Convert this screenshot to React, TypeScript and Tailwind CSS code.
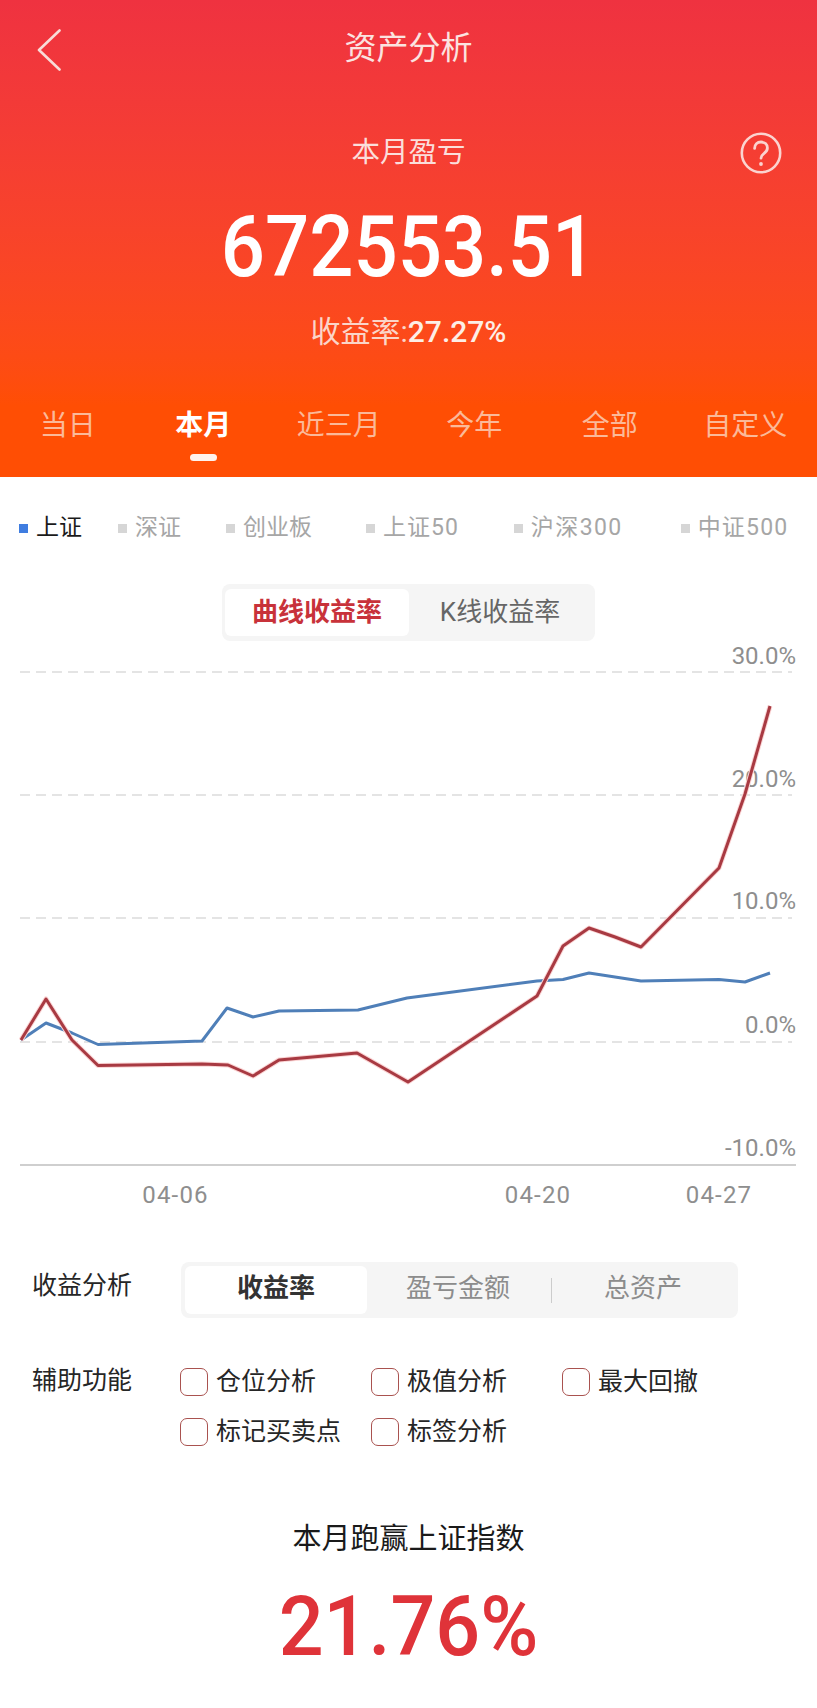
const font = "font-['Roboto','Noto_Sans_CJK_SC',sans-serif]";

const tabs = ["当日", "本月", "近三月", "今年", "全部", "自定义"];

const legend = [
  { label: "上证", active: true, gap: "ml-[19px]", track: "" },
  { label: "深证", active: false, gap: "ml-[36px]", track: "" },
  { label: "创业板", active: false, gap: "ml-[45px]", track: "" },
  { label: "上证50", active: false, gap: "ml-[54px]", track: "tracking-[1px]" },
  { label: "沪深300", active: false, gap: "ml-[55px]", track: "tracking-[1.4px]" },
  { label: "中证500", active: false, gap: "ml-[58px]", track: "tracking-[1.2px]" },
];

const redLine =
  "21,1040 46,999 72,1040 98,1065.5 202,1064 228,1065 253,1076 279,1060 357,1053 408,1082 537,996 563,946 589,928 615,937 641,947 719,868 745,794 770,706";
const blueLine =
  "21,1040 46,1023 72,1033 98,1044.5 202,1041 227,1008 253,1017 279,1011 358,1010 407,998 537,981 563,979.5 589,973 615,977 641,981 719,979.5 745,982 770,973";

const gridY = [672, 795, 918, 1042];
const yLabels = [
  { text: "30.0%", y: 664 },
  { text: "20.0%", y: 787 },
  { text: "10.0%", y: 909 },
  { text: "0.0%", y: 1033 },
  { text: "-10.0%", y: 1156 },
];
const xLabels = [
  { text: "04-06", x: 175.5 },
  { text: "04-20", x: 538 },
  { text: "04-27", x: 719 },
];

function Checkbox({ label }: { label: string }) {
  return (
    <div className="flex h-[28px] items-center">
      <span className="h-[28px] w-[28px] rounded-[7px] border-[1.5px] border-[#a9524f] bg-white" />
      <span className="ml-[8px] text-[25px] leading-[28px] text-[#262626]">{label}</span>
    </div>
  );
}

function Chart() {
  return (
    <svg viewBox="0 641 817 574" className="h-[574px] w-[817px]">
      {gridY.map((y) => (
        <line key={y} x1={20} x2={792} y1={y} y2={y} stroke="#dcdcdc" strokeWidth={1.5} strokeDasharray="10 6" />
      ))}
      <line x1={20} x2={796} y1={1165} y2={1165} stroke="#cfcfcf" strokeWidth={2} />
      {yLabels.map((l) => (
        <text key={l.text} x={796} y={l.y} textAnchor="end" fontSize={24} fill="#8e8e8e" fontFamily="Roboto, sans-serif">
          {l.text}
        </text>
      ))}
      {xLabels.map((l) => (
        <text key={l.text} x={l.x} y={1203} textAnchor="middle" fontSize={24} letterSpacing={1.2} fill="#8e8e8e" fontFamily="Roboto, sans-serif">
          {l.text}
        </text>
      ))}
      <polyline points={blueLine} fill="none" stroke="#4f7fb8" strokeWidth={3} strokeLinejoin="round" />
      <polyline points={redLine} fill="none" stroke="#fbd5d5" strokeWidth={5} strokeLinejoin="round" />
      <polyline points={redLine} fill="none" stroke="#a83a42" strokeWidth={3} strokeLinejoin="round" />
    </svg>
  );
}

export default function App() {
  return (
    <div className={`h-[1708px] w-[817px] overflow-hidden bg-white ${font}`}>
      <header className="flex h-[477px] flex-col bg-gradient-to-b from-[#ef3240] to-[#ff4e04] to-85% text-white">
        <div className="grid h-[95px] grid-cols-[1fr_auto_1fr] items-center">
          <svg viewBox="0 0 24 42" className="ml-[37px] mt-[4px] h-[42px] w-[24px]">
            <path d="M22.5 1.5 2 21l20.5 19.5" fill="none" stroke="#f8dcd8" strokeWidth={2.6} strokeLinecap="round" strokeLinejoin="round" />
          </svg>
          <h1 className="text-[32px] leading-[44px] text-[#fbe3e0]">资产分析</h1>
        </div>

        <div className="mt-[37px] grid h-[42px] grid-cols-[1fr_auto_1fr] items-center">
          <span />
          <span className="text-[28.5px] leading-[42px] text-[#fbdedb]">本月盈亏</span>
          <svg viewBox="0 0 42 42" className="ml-auto mr-[35px] h-[42px] w-[42px]">
            <circle cx={21} cy={21} r={19.2} fill="none" stroke="#fbd3cf" strokeWidth={2.6} />
            <path d="M14.6 16.4c0-4 2.7-6.4 6.4-6.4s6.4 2.4 6.4 6c0 3-1.8 4.4-3.8 5.8-1.7 1.2-2.6 2.2-2.6 4.4" fill="none" stroke="#fbd3cf" strokeWidth={2.8} strokeLinecap="round" />
            <circle cx={21} cy={32} r={1.9} fill="#fbd3cf" />
          </svg>
        </div>

        <div className="mt-[30px] h-[86px] scale-x-[0.905] text-center text-[86px] font-medium leading-[86px] text-white">
          672553.51
        </div>

        <div className="mt-[26px] flex h-[32px] items-center justify-center text-[30px] leading-[32px]">
          <span className="text-[#fbd5c8]">收益率:</span>
          <span className="font-medium text-[#fdeee6]">27.27%</span>
        </div>

        <nav className="mt-[60px] grid w-[813px] grid-cols-6 text-center text-[28px] leading-[36px] text-[#fbb999]">
          {tabs.map((tab) => (
            <div key={tab} className="flex flex-col items-center">
              <span className={tab === "本月" ? "font-bold text-white" : ""}>{tab}</span>
              {tab === "本月" ? <span className="mt-[10px] h-[7px] w-[27px] rounded-full bg-[#fff3ee]" /> : null}
            </div>
          ))}
        </nav>
      </header>

      <div className="mt-[36px] flex h-[30px] items-center">
        {legend.map((item) => (
          <div key={item.label} className={`flex items-center ${item.gap}`}>
            <span className={`h-[9px] w-[9px] ${item.active ? "bg-[#3f7de0]" : "bg-[#d6d6d6]"}`} />
            <span className={`ml-[8px] text-[23px] leading-[30px] ${item.track} ${item.active ? "text-[#1a1a1a]" : "text-[#a6a6a6]"}`}>
              {item.label}
            </span>
          </div>
        ))}
      </div>

      <div className="ml-[222px] mt-[41px] flex h-[57px] w-[373px] items-center rounded-[8px] bg-[#f5f5f5] pl-[3px]">
        <div className="flex h-[47px] w-[184px] items-center justify-center rounded-[6px] bg-white text-[26px] font-bold text-[#c8323a]">
          曲线收益率
        </div>
        <div className="flex-1 pr-[4px] text-center text-[26px] text-[#666666]">K线收益率</div>
      </div>

      <Chart />

      <div className="ml-[32px] mt-[47px] flex items-start">
        <span className="w-[149px] pt-[9px] text-[25px] leading-[30px] text-[#262626]">收益分析</span>
        <div className="flex h-[56px] w-[557px] items-center rounded-[8px] bg-[#f5f5f5] pl-[4px]">
          <div className="flex h-[48px] w-[182px] items-center justify-center rounded-[6px] bg-white pb-[3px] text-[26px] font-bold text-[#333333]">
            收益率
          </div>
          <div className="w-[182px] pb-[3px] text-center text-[26px] text-[#8c8c8c]">盈亏金额</div>
          <span className="ml-[2px] h-[25px] w-px bg-[#cccccc]" />
          <div className="w-[182px] pb-[3px] text-center text-[26px] text-[#8c8c8c]">总资产</div>
        </div>
      </div>

      <div className="ml-[32px] mt-[50px] flex items-start">
        <span className="w-[148px] text-[25px] leading-[26px] text-[#262626]">辅助功能</span>
        <div className="grid grid-cols-[191px_191px_191px] gap-y-[22px]">
          <Checkbox label="仓位分析" />
          <Checkbox label="极值分析" />
          <Checkbox label="最大回撤" />
          <Checkbox label="标记买卖点" />
          <Checkbox label="标签分析" />
        </div>
      </div>

      <div className="mt-[75px] text-center text-[29px] leading-[36px] text-[#1a1a1a]">本月跑赢上证指数</div>
      <div className="mt-[28px] h-[84px] scale-x-[0.94] text-center text-[84px] font-medium leading-[84px] text-[#df3339]">
        21.76%
      </div>
    </div>
  );
}
